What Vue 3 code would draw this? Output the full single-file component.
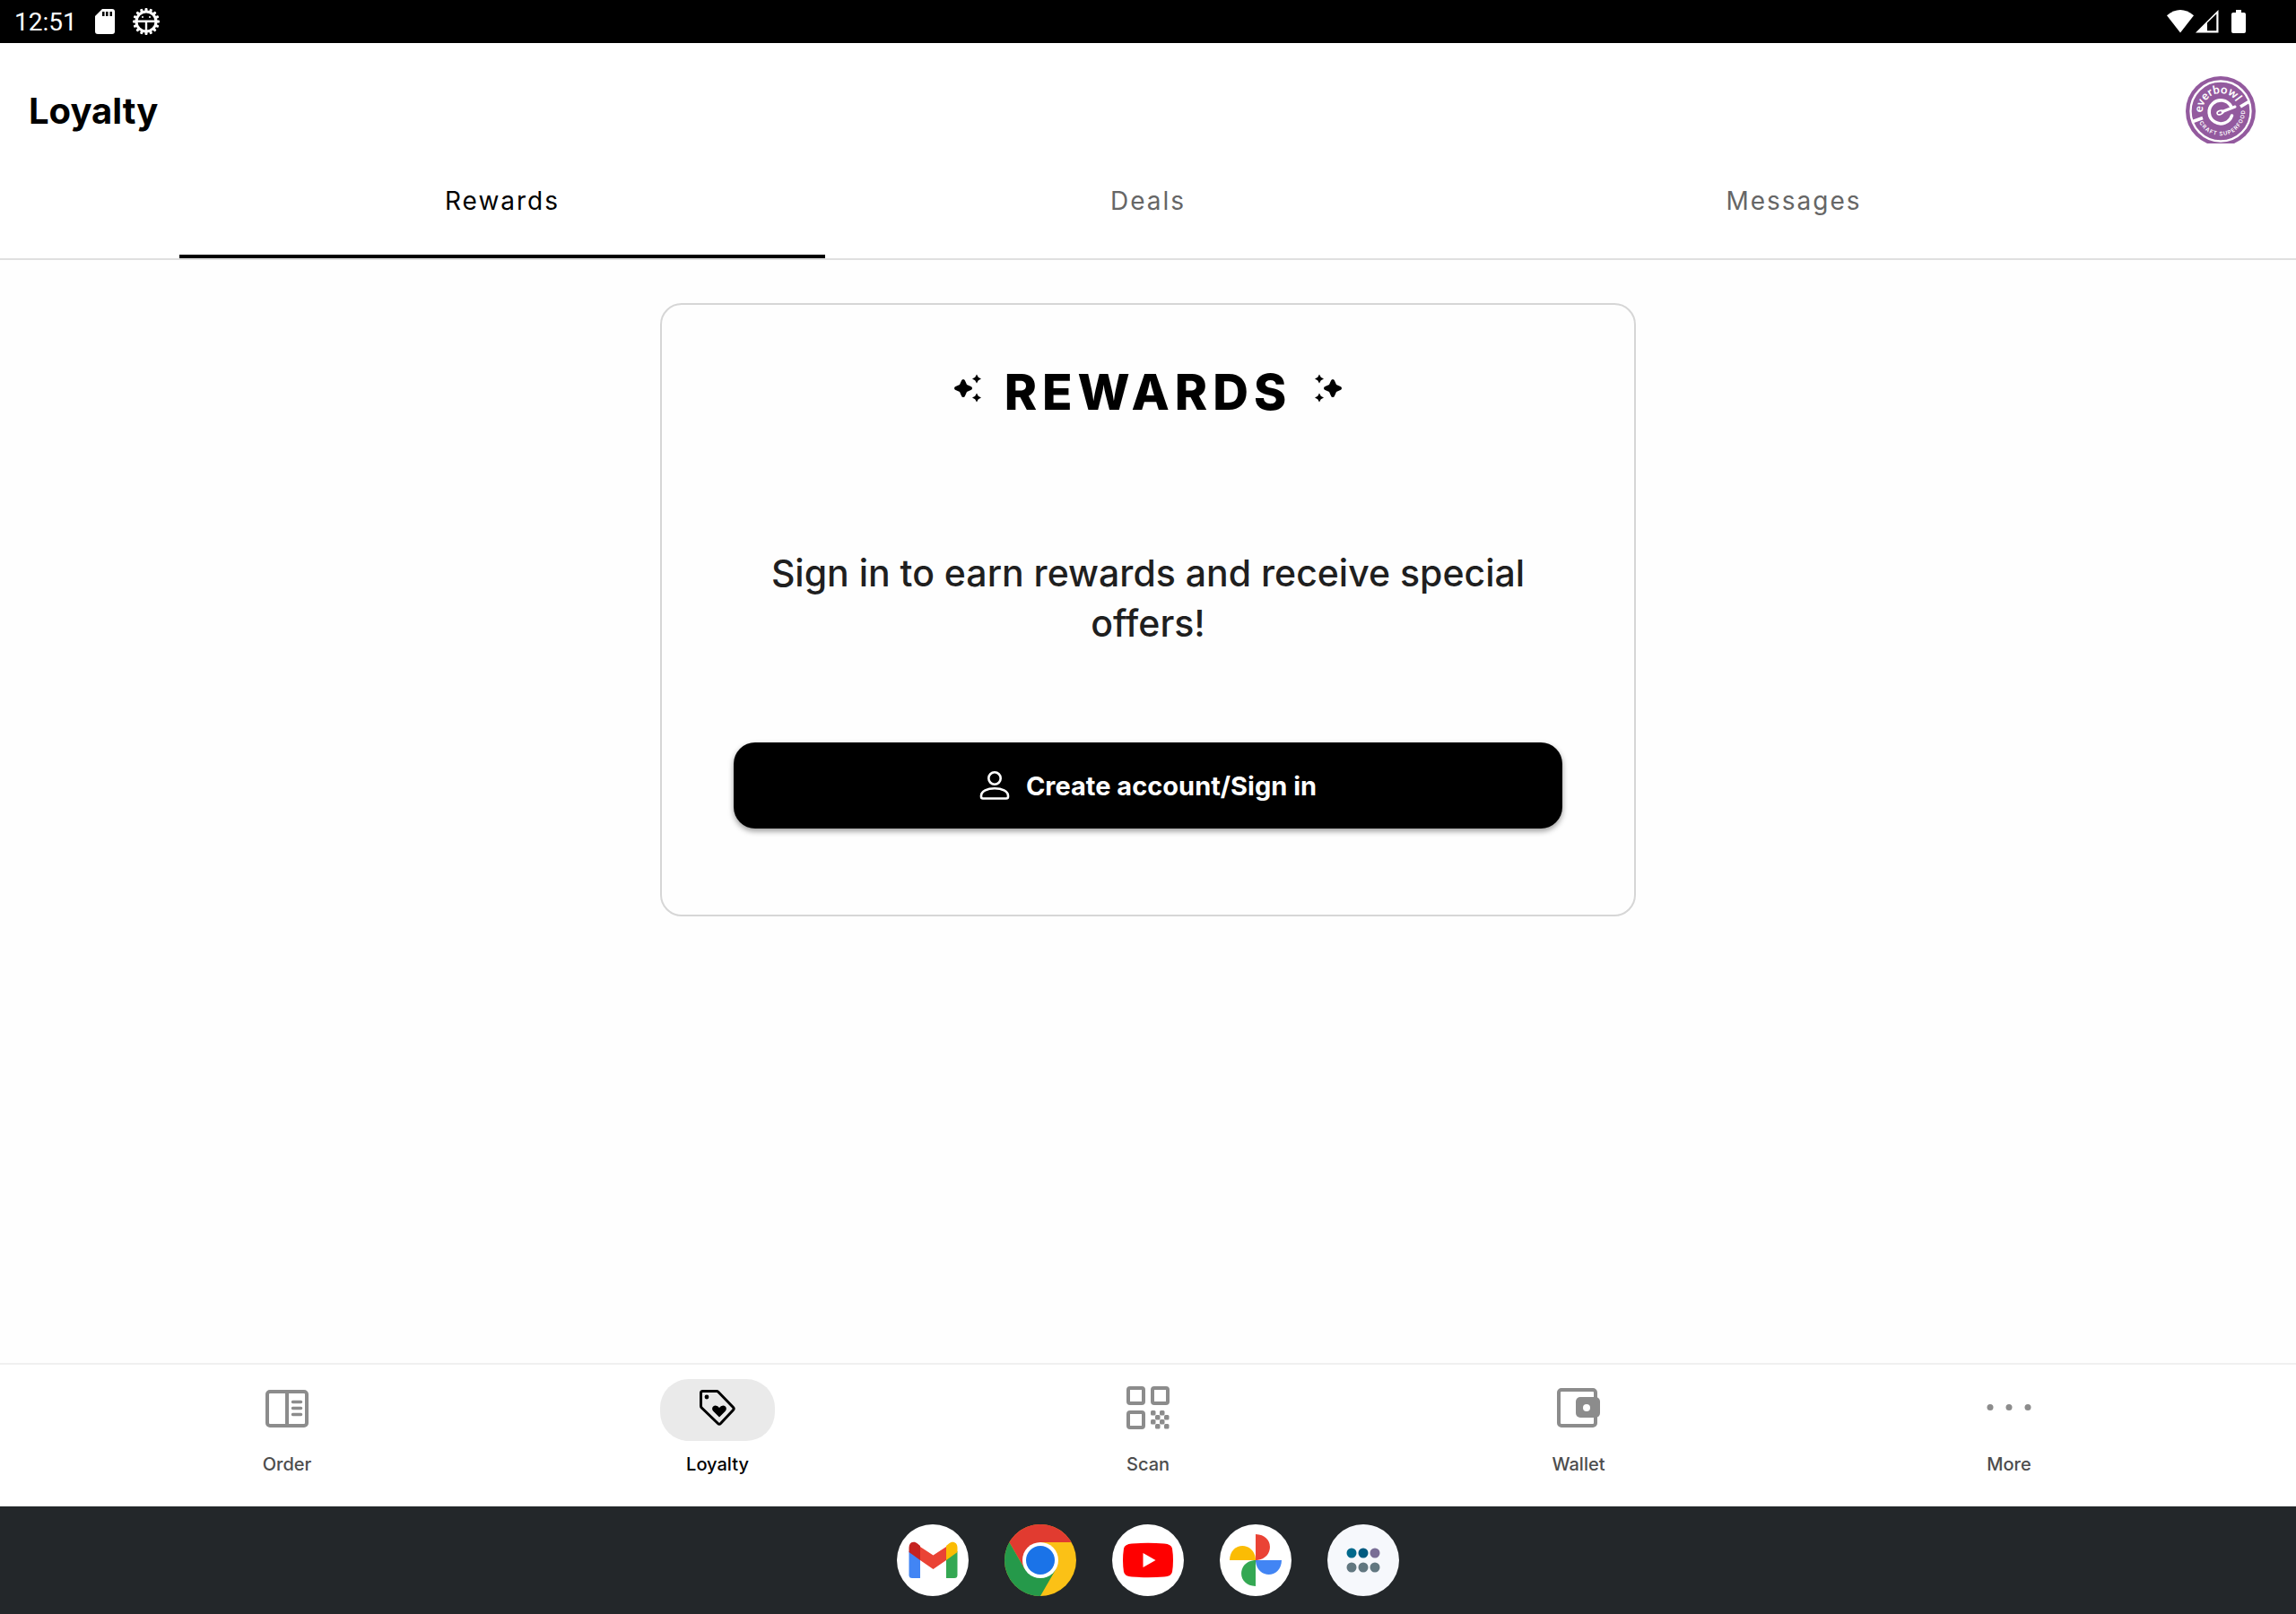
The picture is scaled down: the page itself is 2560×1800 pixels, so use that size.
<script setup>
import { ref } from 'vue';

const time = '12:51';

const tabs = ['Rewards', 'Deals', 'Messages'];
const activeTab = ref('Rewards');

const navItems = ['Order', 'Loyalty', 'Scan', 'Wallet', 'More'];
const activeNav = ref('Loyalty');

// little squares in the last quarter of the QR icon
const qrDots = [
    [27, 27], [37, 27],
    [32, 32], [42, 32],
    [27, 37], [37, 37],
    [32, 42], [42, 42]
];

const gearTeeth = Array.from({ length: 16 }, (_, i) => i * 22.5);

const launcherDots = [
    { x: 27, y: 32, color: '#00698c' },
    { x: 40, y: 32, color: '#005a80' },
    { x: 53, y: 32, color: '#796e96' },
    { x: 27, y: 48, color: '#617780' },
    { x: 40, y: 48, color: '#617780' },
    { x: 53, y: 48, color: '#617780' }
];
</script>

<template>
    <div class="screen">
        <div class="status-bar">
            <div class="status-left">
                <span class="time">{{ time }}</span>
                <svg width="22" height="28" viewBox="0 0 22 28">
                    <path d="M8 0H19Q22 0 22 3V25Q22 28 19 28H3Q0 28 0 25V8Z" fill="#fff" />
                    <path d="M8 3h2.500v5H8zM12 3h2.500v5H12zM16.500 3H19v5h-2.500z" fill="#000" />
                </svg>
                <svg width="30" height="30" viewBox="0 0 30 30">
                    <rect v-for="a in gearTeeth" :key="a" x="13.500" y="0" width="3" height="5" rx="1"
                        fill="#fff" :transform="`rotate(${a} 15 15)`" />
                    <circle cx="15" cy="15" r="11" fill="none" stroke="#fff" stroke-width="3" />
                    <path d="M4 14.700H26M15 15V26" stroke="#fff" stroke-width="2.400" />
                    <circle cx="11" cy="10" r="1" fill="#fff" />
                    <circle cx="19" cy="10" r="1" fill="#fff" />
                </svg>
            </div>
            <div class="status-right">
                <svg width="30" height="26" viewBox="0 0 30 26">
                    <path d="M15 25.500 0 6.200Q15 -6 30 6.200Z" fill="#fff" />
                </svg>
                <svg width="26" height="26" viewBox="0 0 26 26">
                    <path d="M0 25.500 25.500 0V25.500Z" fill="#fff" />
                    <path d="M13 14.500 23.300 4.500V23.300H13Z" fill="#000" />
                </svg>
                <svg class="battery" width="16" height="26" viewBox="0 0 16 26">
                    <path d="M5 0h6v3h3q2 0 2 2v19q0 2-2 2H2q-2 0-2-2V5q0-2 2-2h3z" fill="#fff" />
                </svg>
            </div>
        </div>

        <header class="header">
            <h1>Loyalty</h1>
            <svg width="78" height="75" viewBox="0 0 78 75">
                <defs>
                    <path id="arcTop" d="M35 58.600A20 20 0 1 1 43 58.600" />
                    <path id="arcBottom" d="M14 29A27 27 0 1 0 64 29" />
                </defs>
                <circle cx="39" cy="39" r="39" fill="#935a9e" />
                <circle cx="39" cy="39" r="33.500" fill="none" stroke="#fff" stroke-width="2.300" />
                <path d="M8 50.500 19 46.500M61 34 71 28" stroke="#fff" stroke-width="3.600" />
                <g transform="rotate(-18 39 39)">
                    <text class="logo-name">
                        <textPath href="#arcTop" startOffset="50%" text-anchor="middle">everbowl</textPath>
                    </text>
                </g>
                <g transform="rotate(-16 39 39)">
                    <text class="logo-sub">
                        <textPath href="#arcBottom" startOffset="50%" text-anchor="middle">CRAFT SUPERFOOD</textPath>
                    </text>
                </g>
                <path d="M50.500 33.500A13 13 0 1 0 51.500 44" fill="none" stroke="#fff" stroke-width="3.600"
                    stroke-linecap="round" />
                <path d="M41 39.500 55 34" fill="none" stroke="#fff" stroke-width="3" stroke-linecap="round" />
                <ellipse cx="38.500" cy="40.500" rx="3.600" ry="2" fill="none" stroke="#fff" stroke-width="1.600"
                    transform="rotate(-20 38.500 40.500)" />
            </svg>
        </header>

        <nav class="tabs">
            <button v-for="tab in tabs" :key="tab" :class="['tab', { active: tab === activeTab }]"
                @click="activeTab = tab">{{ tab }}</button>
        </nav>

        <main class="content">
            <section class="card">
                <div class="card-title">
                    <svg width="30" height="32" viewBox="0 0 30 32">
                        <path d="M10 6Q11.500 6 12 7.500L14 12 18.500 14Q20 14.500 20 16T18.500 18L14 20 12 24.500Q11.500 26 10 26T8 24.500L6 20 1.500 18Q0 17.500 0 16T1.500 14L6 12 8 7.500Q8.500 6 10 6Z" />
                        <path d="M25 .500 26.800 3.700 30 5.500 26.800 7.300 25 10.500 23.200 7.300 20 5.500 23.200 3.700ZM25 21.500 26.800 24.700 30 26.500 26.800 28.300 25 31.500 23.200 28.300 20 26.500 23.200 24.700Z" />
                    </svg>
                    <h2>REWARDS</h2>
                    <svg width="30" height="32" viewBox="0 0 30 32">
                        <g transform="matrix(-1 0 0 1 30 0)">
                            <path d="M10 6Q11.500 6 12 7.500L14 12 18.500 14Q20 14.500 20 16T18.500 18L14 20 12 24.500Q11.500 26 10 26T8 24.500L6 20 1.500 18Q0 17.500 0 16T1.500 14L6 12 8 7.500Q8.500 6 10 6Z" />
                            <path d="M25 .500 26.800 3.700 30 5.500 26.800 7.300 25 10.500 23.200 7.300 20 5.500 23.200 3.700ZM25 21.500 26.800 24.700 30 26.500 26.800 28.300 25 31.500 23.200 28.300 20 26.500 23.200 24.700Z" />
                        </g>
                    </svg>
                </div>
                <p class="card-text">Sign in to earn rewards and receive special offers!</p>
                <button class="sign-in">
                    <svg width="34" height="34" viewBox="0 0 34 34" fill="none" stroke="#fff" stroke-width="2.600">
                        <circle cx="17" cy="9" r="6.700" />
                        <path d="M2 28.500C2 23 9 20.300 17 20.300S32 23 32 28.500V29.500Q32 31.500 30 31.500H4Q2 31.500 2 29.500Z" />
                    </svg>
                    <span>Create account/Sign in</span>
                </button>
            </section>
        </main>

        <nav class="bottom-nav">
            <button v-for="item in navItems" :key="item" :class="['nav-item', { active: item === activeNav }]"
                @click="activeNav = item">
                <span class="pill">
                    <svg v-if="item === 'Order'" width="48" height="48" viewBox="0 0 48 48" fill="none"
                        stroke="currentColor" stroke-width="4">
                        <rect x="2" y="6" width="44" height="38" rx="3" />
                        <path d="M24 6V44" />
                        <path d="M30.500 17.500h9M30.500 24.500h9M30.500 31.500h9" stroke-width="3.500"
                            stroke-linecap="round" />
                    </svg>
                    <svg v-else-if="item === 'Loyalty'" width="48" height="48" viewBox="0 0 48 48">
                        <path d="M7.500 5.500H23Q24 5.500 24.800 6.300L41.500 23.500Q43 25 41.500 26.500L27.500 41.500Q26 43 24.500 41.500L6.300 24Q5.500 23.200 5.500 22V7.500Q5.500 5.500 7.500 5.500Z"
                            fill="none" stroke="currentColor" stroke-width="3" />
                        <circle cx="12" cy="12" r="2.400" fill="currentColor" />
                        <path d="M26 34.500 19.500 28C17 25.500 18.200 21.500 21.700 21.500Q24.500 21.500 26 24 27.500 21.500 30.300 21.500C33.800 21.500 35 25.500 32.500 28Z"
                            fill="currentColor" />
                    </svg>
                    <svg v-else-if="item === 'Scan'" width="48" height="48" viewBox="0 0 48 48" fill="none"
                        stroke="currentColor" stroke-width="4">
                        <rect x="2" y="2" width="17" height="17" rx="2" />
                        <rect x="29" y="2" width="17" height="17" rx="2" />
                        <rect x="2" y="29" width="17" height="17" rx="2" />
                        <rect v-for="(dot, index) in qrDots" :key="index" :x="dot[0]" :y="dot[1]" width="5.500"
                            height="5.500" rx="1.500" fill="currentColor" stroke="none" />
                    </svg>
                    <svg v-else-if="item === 'Wallet'" width="48" height="48" viewBox="0 0 48 48">
                        <rect x="2" y="4" width="41" height="40" rx="3" fill="none" stroke="currentColor"
                            stroke-width="4" />
                        <rect x="21" y="12" width="27" height="23" rx="5" fill="currentColor" />
                        <circle cx="33" cy="24" r="4" fill="#fff" />
                    </svg>
                    <svg v-else width="56" height="48" viewBox="0 0 56 48" fill="currentColor">
                        <circle cx="7" cy="23.500" r="3.500" />
                        <circle cx="28" cy="23.500" r="3.500" />
                        <circle cx="49" cy="23.500" r="3.500" />
                    </svg>
                </span>
                <span class="nav-label">{{ item }}</span>
            </button>
        </nav>

        <footer class="dock">
            <button class="app" aria-label="Gmail">
                <svg width="80" height="80" viewBox="0 0 80 80">
                    <circle cx="40" cy="40" r="40" fill="#fff" />
                    <path d="M13.500 30 26 38V60H17Q13.500 60 13.500 56.500Z" fill="#4285f4" />
                    <path d="M55 38 67.500 30V56.500Q67.500 60 64 60H55Z" fill="#34a853" />
                    <path d="M26 25 40.500 34.500 55 25V40L40.500 50 26 40Z" fill="#ea4335" />
                    <path d="M13.500 31V26C13.500 20 19 18 23 21.500L26 24V40Z" fill="#c5221f" />
                    <path d="M67.500 31V26C67.500 20 62 18 58 21.500L55 24V40Z" fill="#fbbc04" />
                </svg>
            </button>
            <button class="app" aria-label="Chrome">
                <svg width="80" height="80" viewBox="0 0 80 80">
                    <circle cx="40" cy="40" r="40" fill="#fbc116" />
                    <path d="M40 40V20H74.640A40 40 0 0 0 5.360 20L22.700 50Z" fill="#e13b30" />
                    <path d="M5.360 20A40 40 0 0 0 40 80L57.300 50H22.680Z" fill="#25994a" />
                    <circle cx="40" cy="40" r="20" fill="#fff" />
                    <circle cx="40" cy="40" r="16" fill="#1a73e8" />
                </svg>
            </button>
            <button class="app" aria-label="YouTube">
                <svg width="80" height="80" viewBox="0 0 80 80">
                    <circle cx="40" cy="40" r="40" fill="#fff" />
                    <path d="M22 21.500Q40 20 58 21.500Q66 22 67 27Q69 40 67 53Q66 58 58 58.500Q40 60 22 58.500Q14 58 13 53Q11 40 13 27Q14 22 22 21.500Z"
                        fill="#f00" />
                    <path d="M34.500 32 48.500 40 34.500 48Z" fill="#fff" />
                </svg>
            </button>
            <button class="app" aria-label="Photos">
                <svg width="80" height="80" viewBox="0 0 80 80">
                    <circle cx="40" cy="40" r="40" fill="#fff" />
                    <path d="M40 11C61 11.500 61 38 41.500 40H40Z" fill="#ea4335" />
                    <path d="M69 40C68.500 61 42 61 40 41.500V40Z" fill="#4285f4" />
                    <path d="M40 69C19 68.500 19 42 38.500 40H40Z" fill="#34a853" />
                    <path d="M11 40C11.500 19 38 19 40 38.500V40Z" fill="#fbbc04" />
                </svg>
            </button>
            <button class="app" aria-label="All apps">
                <svg width="80" height="80" viewBox="0 0 80 80">
                    <circle cx="40" cy="40" r="40" fill="#f6f8fc" />
                    <circle v-for="(dot, index) in launcherDots" :key="index" :cx="dot.x" :cy="dot.y" r="5.500"
                        :fill="dot.color" />
                </svg>
            </button>
        </footer>
    </div>
</template>

<style>
body {
    margin: 0;
}
</style>

<style scoped>
.screen {
    display: flex;
    flex-direction: column;
    min-height: 100vh;
    background: #fefefe;
    font-family: Inter, sans-serif;
    color: #000;
}

svg {
    display: block;
    flex: none;
}

button {
    border: 0;
    background: transparent;
    font-family: inherit;
    cursor: pointer;
}

.status-bar {
    display: flex;
    justify-content: space-between;
    height: 48px;
    padding: 0 56px 0 16px;
    background: #000;
    color: #fff;
}

.status-left,
.status-right {
    display: flex;
    align-items: center;
}

.status-left {
    gap: 20px;
}

.status-right {
    gap: 2px;
}

.time {
    font-family: Roboto, sans-serif;
    font-size: 28px;
    line-height: 48px;
    padding-top: 2px;
}

.battery {
    margin-left: 12px;
}

.header {
    display: flex;
    align-items: flex-end;
    justify-content: space-between;
    height: 112px;
    padding: 0 45px 0 32px;
    background: #fff;
}

h1 {
    margin: 0;
    font-size: 40px;
    font-weight: 700;
    line-height: 72px;
}

.logo-name {
    font-family: Lato, sans-serif;
    font-size: 13px;
    font-weight: 700;
    fill: #fff;
}

.logo-sub {
    font-size: 6px;
    font-weight: 600;
    letter-spacing: 1px;
    fill: #fff;
}

.tabs {
    display: flex;
    padding: 0 200px;
    border-bottom: 2px solid #e0e0e0;
    background: #fff;
}

.tab {
    flex: 1;
    height: 128px;
    padding: 4px 0 0;
    border-bottom: 4px solid transparent;
    color: #666;
    font-size: 28px;
    letter-spacing: 2px;
}

.tab.active {
    border-bottom-color: #000;
    color: #000;
}

.content {
    flex: 1;
    padding: 48px 32px;
}

.card {
    box-sizing: border-box;
    max-width: 1088px;
    margin: 0 auto;
    padding: 64px 80px 96px;
    border: 2px solid #d6d6d6;
    border-radius: 24px;
    text-align: center;
}

.card-title {
    display: flex;
    justify-content: center;
    gap: 26px;
    padding-top: 13px;
}

h2 {
    margin: 0;
    font-size: 55px;
    font-weight: 800;
    line-height: 40px;
    letter-spacing: 6px;
}

.card-text {
    margin: 154px 0 105px;
    color: #1f1f1f;
    font-size: 41px;
    font-weight: 500;
    line-height: 56px;
}

.sign-in {
    display: flex;
    align-items: center;
    justify-content: center;
    gap: 18px;
    width: 100%;
    height: 96px;
    border-radius: 24px;
    background: #000;
    box-shadow: 0 3px 6px rgba(0, 0, 0, 0.4);
    color: #fff;
    font-size: 29px;
    font-weight: 700;
}

.bottom-nav {
    display: flex;
    box-sizing: border-box;
    height: 160px;
    padding: 16px 80px 0;
    border-top: 2px solid #f0f0f0;
    background: #fff;
}

.nav-item {
    display: flex;
    flex: 1;
    flex-direction: column;
    align-items: center;
    gap: 12px;
    padding: 0;
    color: #8c8c8c;
}

.pill {
    display: flex;
    justify-content: center;
    box-sizing: border-box;
    width: 128px;
    height: 69px;
    padding-top: 8px;
    border-radius: 32px;
}

.nav-label {
    color: #4d4d4d;
    font-size: 20px;
    font-weight: 500;
    line-height: 28px;
}

.nav-item.active,
.nav-item.active .nav-label {
    color: #000;
}

.nav-item.active .pill {
    background: #eaeaea;
}

.dock {
    display: flex;
    align-items: center;
    justify-content: center;
    gap: 40px;
    height: 120px;
    background: #23272a;
}

.app {
    padding: 0;
    border-radius: 50%;
}
</style>
